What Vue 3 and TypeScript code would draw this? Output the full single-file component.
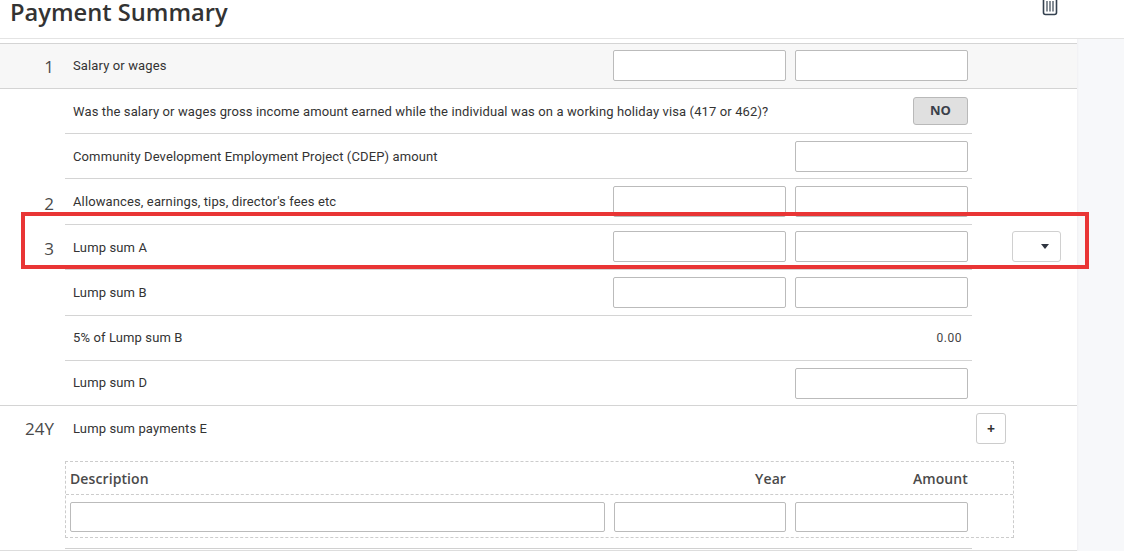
<script setup lang="ts">
interface Row {
  num?: string
  label: string
  nudge?: boolean
}
const rows: Row[] = [
  { num: '2', label: "Allowances, earnings, tips, director's fees etc" },
  { num: '3', label: 'Lump sum A', nudge: true },
  { label: 'Lump sum B' },
]
</script>

<template>
  <div class="page">
    <header class="head">
      <h1>Payment Summary</h1>
      <svg class="trash" width="16" height="16" viewBox="0 0 16 16" fill="none" stroke="#34414f">
        <path d="M1.5 -2V12.5a2 2 0 0 0 2 2h9a2 2 0 0 0 2-2V-2" stroke-width="1.6" />
        <path d="M5 1V11.5M8 1V11.5M11 1V11.5" stroke-width="1.2" />
      </svg>
    </header>
    <div class="content">
      <main class="main">
        <section class="row full shade first">
          <div class="num">1</div>
          <div class="body">
            <span class="label">Salary or wages</span>
            <input class="field" />
            <input class="field" />
          </div>
        </section>
        <section class="row">
          <div class="num"></div>
          <div class="body line">
            <span class="label nudge">Was the salary or wages gross income amount earned while the individual was on a working holiday visa (417 or 462)?</span>
            <button class="no">NO</button>
          </div>
        </section>
        <section class="row">
          <div class="num"></div>
          <div class="body line">
            <span class="label">Community Development Employment Project (CDEP) amount</span>
            <input class="field" />
          </div>
        </section>
        <section v-for="r in rows" :key="r.label" class="row">
          <div class="num">{{ r.num }}</div>
          <div class="body line">
            <span class="label" :class="{ nudge: r.nudge }">{{ r.label }}</span>
            <input class="field" />
            <input class="field" />
          </div>
          <button v-if="r.num === '3'" class="drop"><i class="caret"></i></button>
        </section>
        <section class="row">
          <div class="num"></div>
          <div class="body line">
            <span class="label">5% of Lump sum B</span>
            <span class="value">0.00</span>
          </div>
        </section>
        <section class="row full">
          <div class="num"></div>
          <div class="body">
            <span class="label raise">Lump sum D</span>
            <input class="field" />
          </div>
        </section>
        <section class="row tail">
          <div class="num">24Y</div>
          <div class="tail-body">
            <div class="tail-top">
              <span class="label">Lump sum payments E</span>
              <button class="plus">+</button>
            </div>
            <div class="table">
              <div class="thead">
                <span class="th-desc">Description</span>
                <span class="th-year">Year</span>
                <span class="th-amount">Amount</span>
              </div>
              <div class="tbody">
                <input class="field desc" />
                <input class="field year" />
                <input class="field amount" />
              </div>
            </div>
          </div>
        </section>
      </main>
      <aside class="side"></aside>
    </div>
    <div class="highlight"></div>
  </div>
</template>

<style>
html, body { margin: 0; background: #fff; overflow: hidden; }
</style>

<style scoped>
.page {
  position: relative;
  width: 1124px;
  height: 551px;
  overflow: hidden;
  font-family: Roboto, "Liberation Sans", sans-serif;
  color: #333;
}
.head {
  height: 38px;
  border-bottom: 1px solid #e4e4e4;
  display: flex;
  justify-content: space-between;
  align-items: flex-start;
  padding: 0 66px 0 10px;
}
h1 {
  margin: 0;
  font: 600 23.7px/24px "Open Sans", sans-serif;
  color: #333;
}
.trash { display: block; overflow: hidden; }
.content { display: flex; height: 512px; }
.main { width: 1077px; padding-top: 4px; box-sizing: border-box; }
.side { flex: 1; background: #f7f8fa; box-shadow: inset 2px 0 2px -1px #f0f0f3; }
.row { display: flex; height: 45.4px; box-sizing: border-box; }
.row.first { border-top: 1px solid #d4d4d4; height: 45.6px; }
.row.full { border-bottom: 1px solid #d4d4d4; }
.shade { background: #f7f7f7; }
.num {
  width: 65px;
  flex: none;
  box-sizing: border-box;
  padding: 2px 11px 0 0;
  text-align: right;
  font: 400 17px/1 "Open Sans", sans-serif;
  color: #4a4a4a;
  align-self: center;
}
.body {
  width: 907px;
  flex: none;
  display: flex;
  align-items: center;
  justify-content: flex-end;
  gap: 9px;
  padding-right: 4px;
  box-sizing: border-box;
}
.line { border-bottom: 1px solid #d4d4d4; }
.label {
  margin-right: auto;
  padding-left: 8px;
  font-size: 13px;
  letter-spacing: 0.12px;
  color: #333;
}
.label.nudge { padding-top: 2px; }
.label.raise { padding-bottom: 2px; }
.field {
  width: 173px;
  height: 31px;
  box-sizing: border-box;
  border: 1px solid #bbb;
  border-radius: 2px;
  background: #fff;
  padding: 0;
  outline: none;
}
.no {
  width: 55px;
  height: 28px;
  box-sizing: border-box;
  background: #e0e0e0;
  border: 1px solid #b9b9b9;
  border-radius: 3px;
  font: 700 13px "Open Sans", sans-serif;
  color: #3a3f4a;
  padding: 0 0 2px;
}
.value {
  padding-right: 6px;
  font-size: 12px;
  letter-spacing: 0.5px;
  color: #444;
}
.drop {
  width: 49px;
  height: 31px;
  margin: 6.5px 0 0 40px;
  flex: none;
  box-sizing: border-box;
  background: #fff;
  border: 1px solid #d0d0d0;
  border-radius: 3px;
  padding: 0 11px 0 0;
  display: flex;
  align-items: center;
  justify-content: flex-end;
  position: relative;
  z-index: 1;
}
.caret {
  display: block;
  width: 0;
  height: 0;
  border-left: 4px solid transparent;
  border-right: 4px solid transparent;
  border-top: 5px solid #2f3540;
}
.tail { height: 144.6px; border-bottom: 1px solid #ddd; }
.tail .num { align-self: flex-start; padding-top: 14px; }
.tail-body { flex: none; width: 949px; height: 143px; box-sizing: border-box; position: relative; }
.tail-body::after {
  content: "";
  position: absolute;
  left: 0;
  width: 907px;
  bottom: 0;
  height: 1px;
  background: #d0d0d0;
}
.tail-top {
  height: 55px;
  display: flex;
  justify-content: space-between;
  align-items: flex-start;
  padding-top: 7px;
  box-sizing: border-box;
}
.tail-top .label { line-height: 30px; margin-top: 1px; }
.plus {
  width: 30px;
  height: 31px;
  margin-right: 8px;
  box-sizing: border-box;
  background: #fff;
  border: 1px solid #ccc;
  border-radius: 3px;
  font: 700 14px/1 "Open Sans", sans-serif;
  color: #333;
  padding: 0;
}
.table {
  border: 1px dashed #ccc;
  box-sizing: border-box;
  height: 77px;
}
.thead {
  height: 33px;
  box-sizing: border-box;
  border-bottom: 1px dashed #ccc;
  display: flex;
  align-items: center;
  font: 600 14px "Open Sans", sans-serif;
  letter-spacing: 0.1px;
  color: #4a4a4a;
  padding-left: 4px;
}
.th-desc { flex: 1; }
.th-year { width: 181px; text-align: right; }
.th-amount { width: 182px; text-align: right; margin-right: 45px; }
.tbody {
  display: flex;
  gap: 9px;
  padding: 7px 0 0 4px;
}
.field.desc { width: 535px; height: 30px; }
.field.year { width: 172px; height: 30px; }
.field.amount { width: 173px; height: 30px; }
.highlight {
  position: absolute;
  left: 21px;
  top: 212px;
  width: 1068px;
  height: 57px;
  box-sizing: border-box;
  border: 4px solid #e93535;
  z-index: 2;
  pointer-events: none;
}
</style>
